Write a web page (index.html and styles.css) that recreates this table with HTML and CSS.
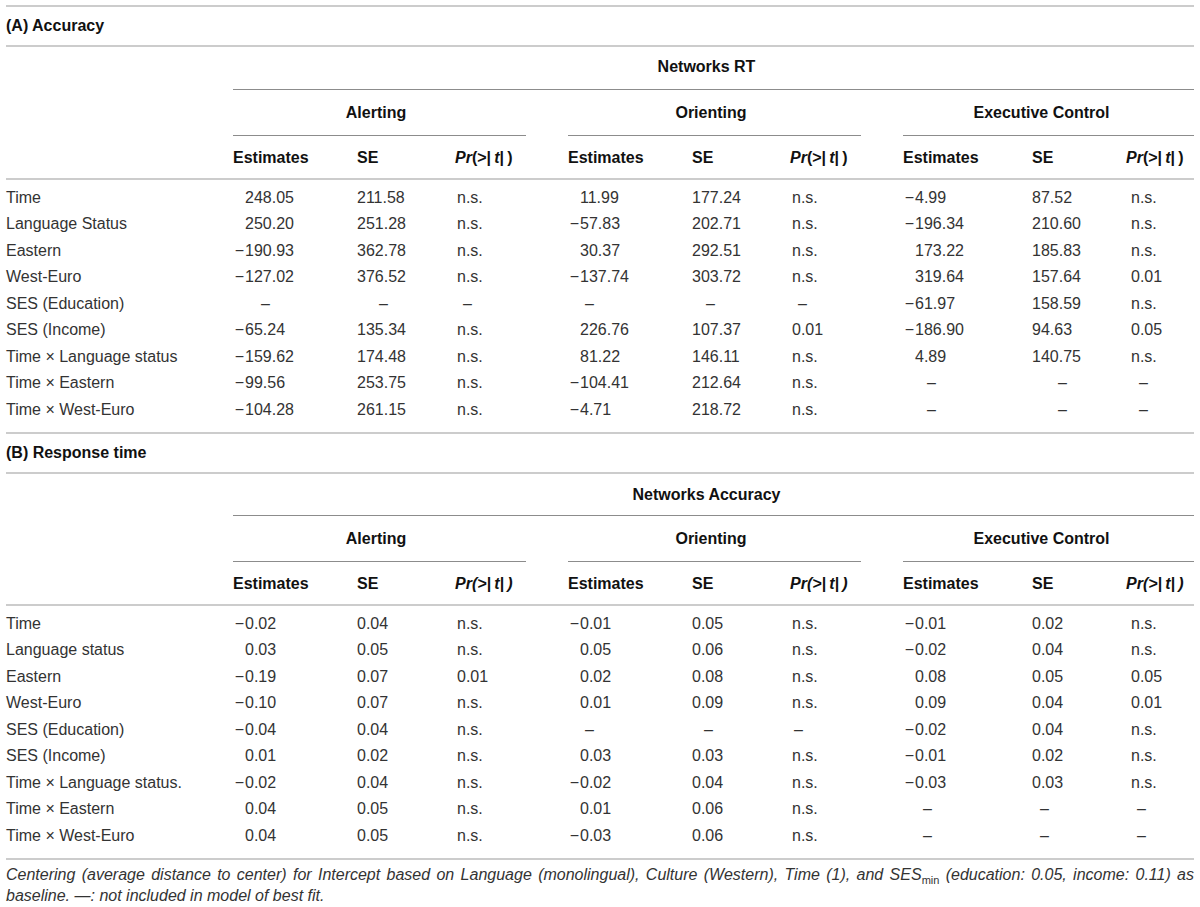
FILE: index.html
```html
<!DOCTYPE html>
<html lang="en">
<head>
<meta charset="utf-8">
<title>Networks table</title>
<link rel="stylesheet" href="styles.css">
</head>
<body>
<div class="page">

<section class="panel">
  <h2 class="panel-title">(A) Accuracy</h2>
  <div class="cols head">
    <div class="spanner">Networks RT</div>
    <div class="group g-first">Alerting</div>
    <div class="group">Orienting</div>
    <div class="group g-last">Executive Control</div>
    <div class="hcell"></div>
    <div class="hcell">Estimates</div><div class="hcell">SE</div><div class="hcell"><i>Pr</i>(&gt;|&thinsp;<i>t</i>|&thinsp;)</div>
    <div class="hcell">Estimates</div><div class="hcell">SE</div><div class="hcell"><i>Pr</i>(&gt;|&thinsp;<i>t</i>|&thinsp;)</div>
    <div class="hcell">Estimates</div><div class="hcell">SE</div><div class="hcell"><i>Pr</i>(&gt;|&thinsp;<i>t</i>|&thinsp;)</div>
  </div>
  <div class="body">
    <div class="cols row"><div>Time</div><div><span class="sg"></span>248.05</div><div>211.58</div><div class="pr">n.s.</div><div><span class="sg"></span>11.99</div><div>177.24</div><div class="pr">n.s.</div><div><span class="sg">−</span>4.99</div><div>87.52</div><div class="pr px">n.s.</div></div>
    <div class="cols row"><div>Language Status</div><div><span class="sg"></span>250.20</div><div>251.28</div><div class="pr">n.s.</div><div><span class="sg">−</span>57.83</div><div>202.71</div><div class="pr">n.s.</div><div><span class="sg">−</span>196.34</div><div>210.60</div><div class="pr px">n.s.</div></div>
    <div class="cols row"><div>Eastern</div><div><span class="sg">−</span>190.93</div><div>362.78</div><div class="pr">n.s.</div><div><span class="sg"></span>30.37</div><div>292.51</div><div class="pr">n.s.</div><div><span class="sg"></span>173.22</div><div>185.83</div><div class="pr px">n.s.</div></div>
    <div class="cols row"><div>West-Euro</div><div><span class="sg">−</span>127.02</div><div>376.52</div><div class="pr">n.s.</div><div><span class="sg">−</span>137.74</div><div>303.72</div><div class="pr">n.s.</div><div><span class="sg"></span>319.64</div><div>157.64</div><div class="pr px">0.01</div></div>
    <div class="cols row"><div>SES (Education)</div><div><span class="na m28">–</span></div><div><span class="na m22">–</span></div><div class="pr"><span class="na m6">–</span></div><div><span class="na m17">–</span></div><div><span class="na m14">–</span></div><div class="pr"><span class="na m6">–</span></div><div><span class="sg">−</span>61.97</div><div>158.59</div><div class="pr px">n.s.</div></div>
    <div class="cols row"><div>SES (Income)</div><div><span class="sg">−</span>65.24</div><div>135.34</div><div class="pr">n.s.</div><div><span class="sg"></span>226.76</div><div>107.37</div><div class="pr">0.01</div><div><span class="sg">−</span>186.90</div><div>94.63</div><div class="pr px">0.05</div></div>
    <div class="cols row"><div>Time × Language status</div><div><span class="sg">−</span>159.62</div><div>174.48</div><div class="pr">n.s.</div><div><span class="sg"></span>81.22</div><div>146.11</div><div class="pr">n.s.</div><div><span class="sg"></span>4.89</div><div>140.75</div><div class="pr px">n.s.</div></div>
    <div class="cols row"><div>Time × Eastern</div><div><span class="sg">−</span>99.56</div><div>253.75</div><div class="pr">n.s.</div><div><span class="sg">−</span>104.41</div><div>212.64</div><div class="pr">n.s.</div><div><span class="na m24">–</span></div><div><span class="na m26">–</span></div><div class="pr px"><span class="na m8">–</span></div></div>
    <div class="cols row"><div>Time × West-Euro</div><div><span class="sg">−</span>104.28</div><div>261.15</div><div class="pr">n.s.</div><div><span class="sg">−</span>4.71</div><div>218.72</div><div class="pr">n.s.</div><div><span class="na m24">–</span></div><div><span class="na m26">–</span></div><div class="pr px"><span class="na m8">–</span></div></div>
  </div>
</section>

<section class="panel panel-last">
  <h2 class="panel-title">(B) Response time</h2>
  <div class="cols head">
    <div class="spanner">Networks Accuracy</div>
    <div class="group g-first">Alerting</div>
    <div class="group">Orienting</div>
    <div class="group g-last">Executive Control</div>
    <div class="hcell"></div>
    <div class="hcell">Estimates</div><div class="hcell">SE</div><div class="hcell"><i>Pr(&gt;|&thinsp;t|&thinsp;)</i></div>
    <div class="hcell">Estimates</div><div class="hcell">SE</div><div class="hcell"><i>Pr(&gt;|&thinsp;t|&thinsp;)</i></div>
    <div class="hcell">Estimates</div><div class="hcell">SE</div><div class="hcell"><i>Pr(&gt;|&thinsp;t|&thinsp;)</i></div>
  </div>
  <div class="body">
    <div class="cols row"><div>Time</div><div><span class="sg">−</span>0.02</div><div>0.04</div><div class="pr">n.s.</div><div><span class="sg">−</span>0.01</div><div>0.05</div><div class="pr">n.s.</div><div><span class="sg">−</span>0.01</div><div>0.02</div><div class="pr px">n.s.</div></div>
    <div class="cols row"><div>Language status</div><div><span class="sg"></span>0.03</div><div>0.05</div><div class="pr">n.s.</div><div><span class="sg"></span>0.05</div><div>0.06</div><div class="pr">n.s.</div><div><span class="sg">−</span>0.02</div><div>0.04</div><div class="pr px">n.s.</div></div>
    <div class="cols row"><div>Eastern</div><div><span class="sg">−</span>0.19</div><div>0.07</div><div class="pr">0.01</div><div><span class="sg"></span>0.02</div><div>0.08</div><div class="pr">n.s.</div><div><span class="sg"></span>0.08</div><div>0.05</div><div class="pr px">0.05</div></div>
    <div class="cols row"><div>West-Euro</div><div><span class="sg">−</span>0.10</div><div>0.07</div><div class="pr">n.s.</div><div><span class="sg"></span>0.01</div><div>0.09</div><div class="pr">n.s.</div><div><span class="sg"></span>0.09</div><div>0.04</div><div class="pr px">0.01</div></div>
    <div class="cols row"><div>SES (Education)</div><div><span class="sg">−</span>0.04</div><div>0.04</div><div class="pr">n.s.</div><div><span class="na m17">–</span></div><div><span class="na m12">–</span></div><div class="pr"><span class="na m2">–</span></div><div><span class="sg">−</span>0.02</div><div>0.04</div><div class="pr px">n.s.</div></div>
    <div class="cols row"><div>SES (Income)</div><div><span class="sg"></span>0.01</div><div>0.02</div><div class="pr">n.s.</div><div><span class="sg"></span>0.03</div><div>0.03</div><div class="pr">n.s.</div><div><span class="sg">−</span>0.01</div><div>0.02</div><div class="pr px">n.s.</div></div>
    <div class="cols row"><div>Time × Language status.</div><div><span class="sg">−</span>0.02</div><div>0.04</div><div class="pr">n.s.</div><div><span class="sg">−</span>0.02</div><div>0.04</div><div class="pr">n.s.</div><div><span class="sg">−</span>0.03</div><div>0.03</div><div class="pr px">n.s.</div></div>
    <div class="cols row"><div>Time × Eastern</div><div><span class="sg"></span>0.04</div><div>0.05</div><div class="pr">n.s.</div><div><span class="sg"></span>0.01</div><div>0.06</div><div class="pr">n.s.</div><div><span class="na m20">–</span></div><div><span class="na m8">–</span></div><div class="pr px"><span class="na m6">–</span></div></div>
    <div class="cols row"><div>Time × West-Euro</div><div><span class="sg"></span>0.04</div><div>0.05</div><div class="pr">n.s.</div><div><span class="sg">−</span>0.03</div><div>0.06</div><div class="pr">n.s.</div><div><span class="na m20">–</span></div><div><span class="na m8">–</span></div><div class="pr px"><span class="na m6">–</span></div></div>
  </div>
</section>

<p class="note">Centering (average distance to center) for Intercept based on Language (monolingual), Culture (Western), Time (1), and SES<sub>min</sub> (education: 0.05, income: 0.11) as baseline. —: not included in model of best fit.</p>

</div>
</body>
</html>
```

FILE: styles.css
```css
* {
  box-sizing: border-box;
}

html, body {
  margin: 0;
  background: #ffffff;
}

body {
  font-family: "Liberation Sans", Arial, Helvetica, sans-serif;
  font-size: 16px;
  color: #333333;
}

.page {
  width: 1200px;
  padding: 5px 6px 0;
}

.panel {
  border-top: 2px solid #cccccc;
}

.panel-last {
  border-bottom: 2px solid #cccccc;
}

.panel-title {
  margin: 0;
  height: 40px;
  display: flex;
  align-items: center;
  font-size: 16px;
  font-weight: bold;
  color: #111111;
  border-bottom: 2px solid #cccccc;
}

.cols {
  display: grid;
  grid-template-columns: 227px 124px 98px 113px 124px 98px 113px 129px 94px 68px;
}

.spanner {
  grid-column: 2 / -1;
  height: 43px;
  padding: 0 14px 3px 0;
  display: flex;
  align-items: center;
  justify-content: center;
  font-weight: bold;
  color: #111111;
  border-bottom: 1px solid #8c8c8c;
}

.panel-last .spanner {
  height: 42px;
  padding-bottom: 0;
}

.group {
  grid-column: span 3;
  height: 46px;
  margin-right: 42px;
  padding-right: 7px;
  display: flex;
  align-items: center;
  justify-content: center;
  font-weight: bold;
  color: #111111;
  border-bottom: 1px solid #8c8c8c;
}

.g-first {
  grid-column: 2 / span 3;
}

.g-last {
  margin-right: 0;
  padding-right: 14px;
}

.hcell {
  height: 44px;
  padding-top: 1px;
  display: flex;
  align-items: center;
  white-space: nowrap;
  font-weight: bold;
  color: #111111;
  border-bottom: 2px solid #cccccc;
}

.body {
  padding: 4.5px 0 9px;
}

.row {
  height: 26.5px;
  align-items: center;
}

.row > div {
  white-space: nowrap;
}

.pr {
  padding-left: 2px;
}

.pr.px {
  padding-left: 5px;
}

.sg {
  display: inline-block;
  width: 12px;
  padding-right: 1px;
  text-align: right;
}

.na {
  display: inline-block;
}

.m2 { margin-left: 2px; }
.m6 { margin-left: 6px; }
.m8 { margin-left: 8px; }
.m12 { margin-left: 12px; }
.m14 { margin-left: 14px; }
.m17 { margin-left: 17px; }
.m20 { margin-left: 20px; }
.m22 { margin-left: 22px; }
.m24 { margin-left: 24px; }
.m26 { margin-left: 26px; }
.m28 { margin-left: 28px; }

.note {
  margin: 0;
  padding-top: 4.5px;
  font-size: 16px;
  line-height: 19px;
  font-style: italic;
  text-align: justify;
  color: #333333;
}

.note sub {
  font-size: 11px;
  line-height: 1;
  font-style: normal;
  vertical-align: sub;
}
```
